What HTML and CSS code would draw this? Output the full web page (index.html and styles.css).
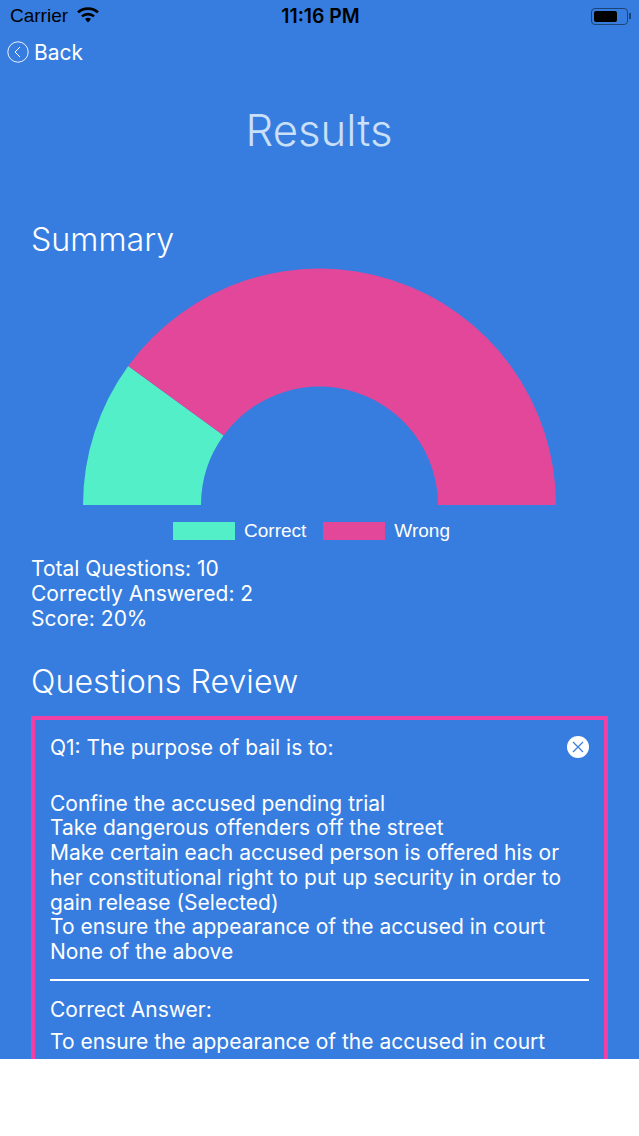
FILE: index.html
```html
<!DOCTYPE html>
<html lang="en">
<head>
    <meta charset="UTF-8">
    <meta name="viewport" content="width=device-width, initial-scale=1.0">
    <title>Results</title>
    <link rel="stylesheet" href="styles.css">
</head>
<body>
    <div class="screen">
        <div class="status-bar">
            <div class="status-left">
                <span>Carrier</span>
                <svg class="wifi" width="22" height="16" viewBox="0 0 22 16">
                    <path d="M11 15.5l-3-3.4a4.6 4.6 0 0 1 6 0z" fill="#000"/>
                    <path d="M1 5.4a15 15 0 0 1 20 0" fill="none" stroke="#000" stroke-width="2.6"/>
                    <path d="M5 9.4a9 9 0 0 1 12 0" fill="none" stroke="#000" stroke-width="2.6"/>
                </svg>
            </div>
            <div class="status-time">11:16 PM</div>
            <div class="status-right">
                <div class="battery"><div class="battery-level"></div></div>
                <div class="battery-cap"></div>
            </div>
        </div>

        <div class="back">
            <svg width="22" height="22" viewBox="0 0 22 22">
                <circle cx="11" cy="11" r="10.2" fill="none" stroke="#fff" stroke-width="0.9"/>
                <path d="M13 6l-5 5 5 5" fill="none" stroke="#fff" stroke-width="1"/>
            </svg>
            <span>Back</span>
        </div>

        <h1 class="title">Results</h1>

        <div class="content">
            <h2 class="heading summary-heading">Summary</h2>

            <svg class="chart" width="473" height="237" viewBox="0 0 473 237">
                <path d="M0 237A236.5 236.5 0 0 1 45.2 98L140.6 167.5A118.5 118.5 0 0 0 118 237z" fill="#52efc8"/>
                <path d="M45.2 98A236.5 236.5 0 0 1 473 237H355A118.5 118.5 0 0 0 140.6 167.5z" fill="#e2479a"/>
            </svg>

            <div class="legend">
                <div class="legend-box correct"></div>
                <span>Correct</span>
                <div class="legend-box wrong"></div>
                <span>Wrong</span>
            </div>

            <div class="stats">
                <div>Total Questions: 10</div>
                <div>Correctly Answered: 2</div>
                <div>Score: 20%</div>
            </div>

            <h2 class="heading review-heading">Questions Review</h2>

            <div class="question-card">
                <div class="question-top">
                    <div>Q1: The purpose of bail is to:</div>
                    <svg class="wrong-icon" width="22" height="22" viewBox="0 0 22 22">
                        <circle cx="11" cy="11" r="11" fill="#fff"/>
                        <path d="M6 6l10 10M16 6L6 16" stroke="#367ddf" stroke-width="1.2"/>
                    </svg>
                </div>
                <div class="options">
                    <div>Confine the accused pending trial</div>
                    <div>Take dangerous offenders off the street</div>
                    <div>Make certain each accused person is offered his or her constitutional right to put up security in order to gain release (Selected)</div>
                    <div>To ensure the appearance of the accused in court</div>
                    <div>None of the above</div>
                </div>
                <div class="divider"></div>
                <div class="answer-label">Correct Answer:</div>
                <div class="answer">To ensure the appearance of the accused in court</div>
            </div>
        </div>
    </div>
</body>
</html>
```

FILE: styles.css
```css
html, body {
    margin: 0;
    background: #fff;
}

body {
    height: 1136px;
    overflow: hidden;
}

.screen {
    height: 1059px;
    overflow: hidden;
    background-color: #367ddf;
    color: #fff;
    font-family: Inter, "Liberation Sans", sans-serif;
}

/* status bar */
.status-bar {
    display: flex;
    justify-content: space-between;
    align-items: center;
    height: 32px;
    padding: 0 8px 0 10px;
    color: #000;
    font-size: 19px;
}

.status-left {
    display: flex;
    align-items: center;
    gap: 9px;
    width: 200px;
    font-family: "Liberation Sans", sans-serif;
}

.wifi {
    margin-top: -3px;
}

.status-time {
    font-weight: 600;
    font-size: 19.4px;
}

.status-right {
    display: flex;
    align-items: center;
    justify-content: flex-end;
    width: 200px;
    gap: 1px;
}

.battery {
    box-sizing: border-box;
    width: 37px;
    height: 17px;
    padding: 2px;
    border: 1px solid #1d4476;
    border-radius: 4px;
}

.battery-level {
    width: 23px;
    height: 100%;
    background-color: #000;
    border-radius: 2px;
}

.battery-cap {
    width: 2px;
    height: 6px;
    background-color: #1d4476;
}

/* back link */
.back {
    display: flex;
    align-items: center;
    gap: 5px;
    height: 40px;
    padding-left: 7px;
    font-size: 21px;
    font-weight: 400;
}

/* headings */
.title {
    margin: 19px 0 0;
    height: 80px;
    line-height: 80px;
    padding-right: 1px;
    text-align: center;
    font-size: 43.7px;
    font-weight: 300;
    color: #c9e0f8;
}

.content {
    padding: 0 31px;
}

.heading {
    margin: 0;
    font-size: 32.2px;
    font-weight: 300;
    line-height: 40px;
}

.summary-heading {
    margin-top: 49px;
}

/* chart */
.chart {
    display: block;
    margin: 8px 0 0 52px;
}

.legend {
    display: flex;
    align-items: center;
    justify-content: center;
    height: 18px;
    margin-top: 17px;
    padding-right: 16px;
    font-family: "Liberation Sans", sans-serif;
    font-size: 19px;
}

.legend-box {
    width: 62px;
    height: 18px;
    margin-right: 9px;
}

.legend-box.correct {
    background-color: #52efc8;
}

.legend-box.wrong {
    margin-left: 17px;
    background-color: #e2479a;
}

.stats {
    margin-top: 16px;
    font-size: 21px;
    font-weight: 400;
    line-height: 25px;
}

.review-heading {
    margin-top: 31px;
}

/* question card, runs past the bottom of the screen */
.question-card {
    margin-top: 14px;
    padding: 16px 15px 60px;
    border: 4px solid #f13fa8;
    font-size: 21px;
    font-weight: 400;
    line-height: 24.7px;
}

.question-top {
    display: flex;
    justify-content: space-between;
    align-items: flex-start;
}

.wrong-icon {
    flex-shrink: 0;
}

.options {
    margin-top: 31px;
}

.divider {
    height: 2px;
    margin-top: 14px;
    background-color: #fff;
}

.answer-label {
    margin-top: 17px;
}

.answer {
    margin-top: 8px;
}
```
